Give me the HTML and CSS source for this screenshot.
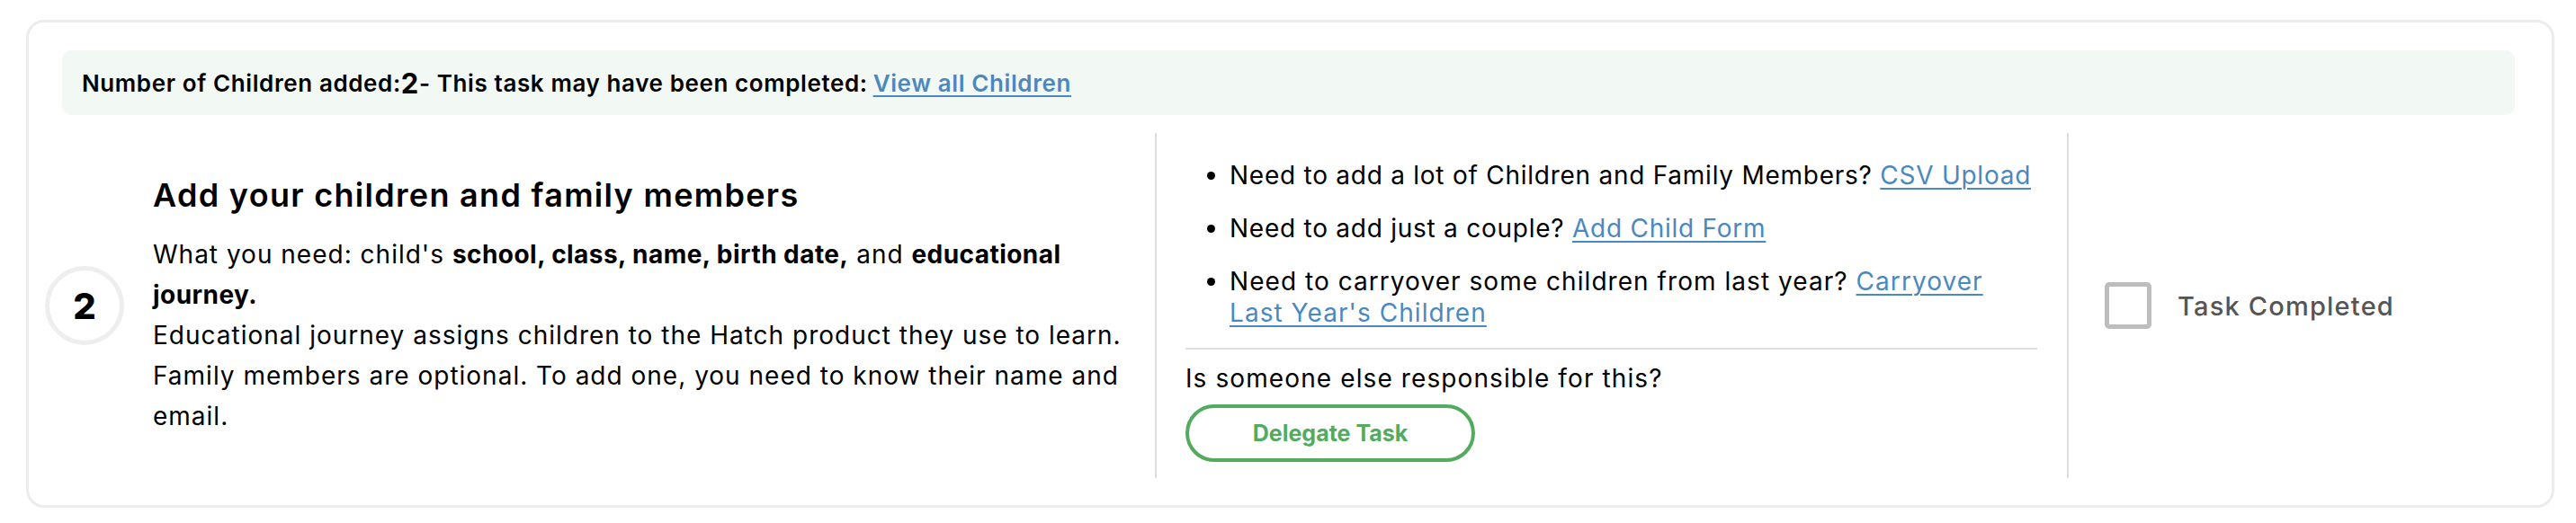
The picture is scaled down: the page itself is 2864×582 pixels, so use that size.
FILE: index.html
```html
<!DOCTYPE html>
<html lang="en">
<head>
<meta charset="utf-8">
<title>Task</title>
<link rel="stylesheet" href="styles.css">
</head>
<body>
<div class="card">
  <div class="banner">Number of Children added:<span class="count">2</span>- This task may have been completed: <a href="#" class="link">View all Children</a></div>
  <div class="row">
    <div class="col col-info">
      <div class="step">2</div>
      <div class="info">
        <h2 class="title">Add your children and family members</h2>
        <p class="desc">What you need: child's <b>school, class, name, birth date,</b> and <b>educational</b> <b>journey.</b><br>Educational journey assigns children to the Hatch product they use to learn. Family members are optional. To add one, you need to know their name and email.</p>
      </div>
    </div>
    <div class="col col-actions">
      <ul class="options">
        <li>Need to add a lot of Children and Family Members? <a href="#" class="link">CSV Upload</a></li>
        <li>Need to add just a couple? <a href="#" class="link">Add Child Form</a></li>
        <li class="carry">Need to carryover some children from last year? <a href="#" class="link">Carryover</a> <a href="#" class="link nowrap">Last Year's Children</a></li>
      </ul>
      <div class="divider"></div>
      <p class="question">Is someone else responsible for this?</p>
      <button class="delegate">Delegate Task</button>
    </div>
    <div class="col col-done">
      <span class="checkbox"></span>
      <span class="done-label">Task Completed</span>
    </div>
  </div>
</div>
</body>
</html>
```
FILE: styles.css
```css
html, body {
  margin: 0;
  padding: 0;
  background: #ffffff;
}
body {
  font-family: Inter, "Liberation Sans", sans-serif;
  color: #000;
}
.card {
  margin: 22px 24px 0 29px;
  border: 3px solid #ececec;
  border-radius: 20px;
  box-sizing: border-box;
  height: 543px;
  display: flex;
  flex-direction: column;
}
.banner {
  margin: 31px 41px 20px 37px;
  height: 72px;
  background: #f2f8f4;
  border-radius: 10px;
  display: flex;
  align-items: center;
  padding-left: 22px;
  font-size: 26px;
  font-weight: 600;
  letter-spacing: 0.6px;
  white-space: nowrap;
}
.count {
  font-size: 31px;
  font-weight: 700;
}
.link {
  color: #4a89c0;
  text-decoration: underline;
  text-decoration-thickness: 2px;
  text-underline-offset: 4px;
  margin-left: 6px;
}
.options .link { margin-left: 0; }
.nowrap { white-space: nowrap; }
.row {
  display: flex;
  margin: 0 41px 30px 18px;
  height: 384px;
}
.col-info {
  width: 1236px;
  border-right: 2px solid #dedede;
  display: flex;
  align-items: center;
  box-sizing: border-box;
}
.step {
  width: 88px;
  height: 88px;
  flex: 0 0 88px;
  border: 5px solid #eeeeee;
  border-radius: 50%;
  box-sizing: border-box;
  display: flex;
  align-items: center;
  justify-content: center;
  font-size: 40px;
  font-weight: 800;
}
.info {
  margin-left: 32px;
  padding-right: 26px;
}
.title {
  margin: 0 0 22px;
  font-size: 36px;
  font-weight: 600;
  letter-spacing: 1.3px;
  line-height: 44px;
}
.desc {
  margin: 0;
  font-size: 28px;
  line-height: 45px;
  letter-spacing: 1px;
}
.desc b { font-weight: 700; letter-spacing: 0.45px; }
.col-actions {
  width: 1014px;
  border-right: 2px solid #dedede;
  box-sizing: border-box;
  padding: 30px 33px 0 32px;
}
.options {
  margin: 0;
  padding-left: 49px;
  font-size: 28px;
  line-height: 35px;
  letter-spacing: 0.75px;
}
.options li + li { margin-top: 24px; }
.options .carry { letter-spacing: 1.05px; }
.divider {
  height: 2px;
  background: #dedede;
  margin-top: 21px;
}
.question {
  margin: 15px 0 0;
  font-size: 28px;
  line-height: 35px;
  letter-spacing: 1.1px;
}
.delegate {
  margin-top: 11px;
  width: 322px;
  height: 64px;
  border: 4px solid #52ab5e;
  border-radius: 32px;
  background: #fff;
  color: #52ab5e;
  font-family: inherit;
  font-size: 25px;
  font-weight: 700;
  cursor: pointer;
}
.col-done {
  flex: 1;
  display: flex;
  align-items: center;
  padding-left: 40px;
}
.checkbox {
  width: 52px;
  height: 52px;
  border: 5px solid #bdbdbd;
  border-radius: 5px;
  box-sizing: border-box;
  flex: 0 0 52px;
}
.done-label {
  margin-left: 29px;
  font-size: 29px;
  font-weight: 500;
  letter-spacing: 1.2px;
  color: #555555;
}
```
